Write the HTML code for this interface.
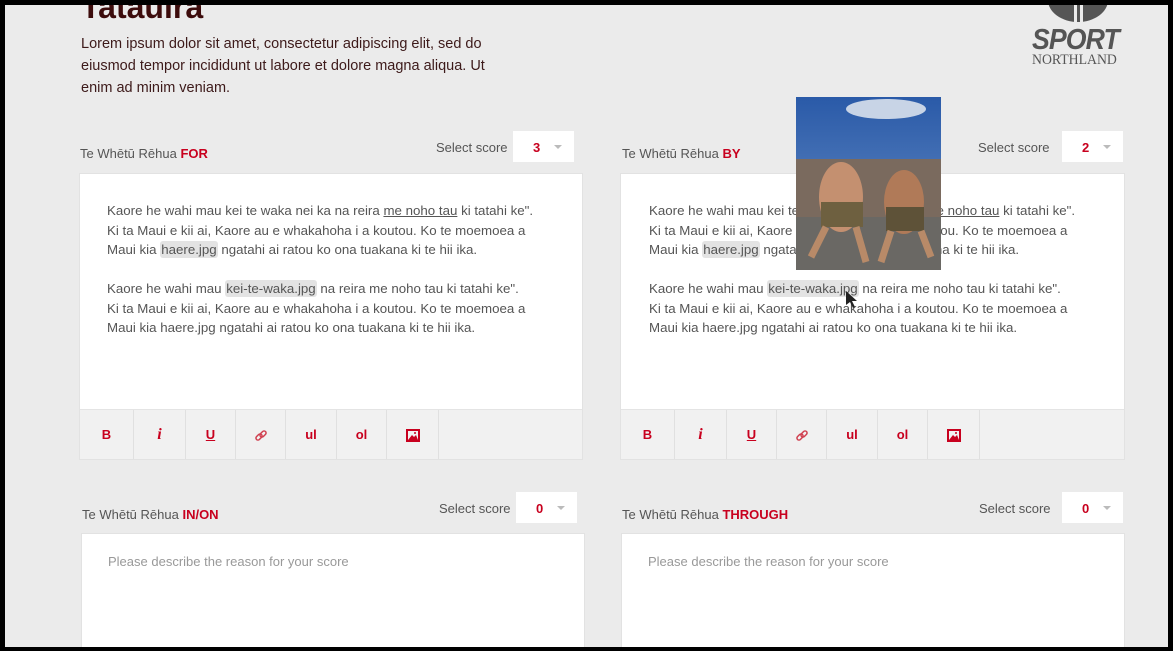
<!DOCTYPE html>
<html><head><meta charset="utf-8"><style>
*{margin:0;padding:0;box-sizing:border-box}
body{width:1173px;height:651px;overflow:hidden;background:#000;font-family:"Liberation Sans",sans-serif;position:relative}
#pg{position:absolute;left:5px;top:5px;width:1163px;height:642px;background:#ebebeb;overflow:hidden}
.a{position:absolute}
.lab{font-size:13px;color:#555}
.lab b{color:#c8001e}
.ss{font-size:13px;color:#555}
.sel{background:#fff;width:61px;height:31px;font-size:13px;font-weight:bold;color:#c8001e;padding:9px 0 0 20px}
.sel:after{content:"";position:absolute;right:12px;top:14px;border:4px solid transparent;border-top:4px solid #bbb}
.pan{background:#fff;border:1px solid #e2e2e2}
.txt{font-size:13.3px;color:#555;line-height:19.5px;white-space:nowrap}
.hl{background:#e3e3e3;border-radius:3px;padding:1px 1px}
.u{text-decoration:underline}
.tb{position:absolute;left:0;right:0;bottom:0;height:50px;background:#f1f1f1;border-top:1px solid #e4e4e4}
.tb span{position:absolute;top:0;height:49px;border-right:1px solid #e0e0e0;color:#c8001e;font-weight:bold;font-size:13px;text-align:center;line-height:49px}
.ph{font-size:13px;color:#999}
</style></head><body><div id="pg">
<div class="a" style="left:76px;top:-16px;font-size:32px;font-weight:bold;color:#3d0c0c">Tatauira</div>
<div class="a" style="left:76px;top:28px;width:425px;font-size:14.5px;line-height:22px;color:#3d1a1a">Lorem ipsum dolor sit amet, consectetur adipiscing elit, sed do eiusmod tempor incididunt ut labore et dolore magna aliqua. Ut enim ad minim veniam.</div>
<svg class="a" style="left:1040px;top:-5px" width="70" height="24"><ellipse cx="33" cy="0" rx="30" ry="22" fill="#555"/><rect x="29" y="0" width="3" height="22" fill="#ebebeb"/><rect x="35" y="0" width="3" height="22" fill="#ebebeb"/></svg>
<div class="a" style="left:1027px;top:19px;font-size:29px;font-weight:bold;font-style:italic;color:#555;letter-spacing:-1px;transform:scaleX(0.92);transform-origin:left">SPORT</div>
<div class="a" style="left:1027px;top:47px;font-size:14.5px;color:#555;font-family:'Liberation Serif',serif;transform:scaleX(0.95);transform-origin:left">NORTHLAND</div>

<div class="a lab" style="left:75px;top:141px">Te Whētū Rēhua <b>FOR</b></div>
<div class="a ss" style="left:431px;top:135px">Select score</div>
<div class="a sel" style="left:508px;top:126px">3</div>
<div class="a pan" style="left:74px;top:168px;width:504px;height:287px">
<div class="a txt" style="left:27px;top:27px">Kaore he wahi mau kei te waka nei ka na reira <span class="u">me noho tau</span> ki tatahi ke".<br>Ki ta Maui e kii ai, Kaore au e whakahoha i a koutou. Ko te moemoea a<br>Maui kia <span class="hl">haere.jpg</span> ngatahi ai ratou ko ona tuakana ki te hii ika.<br><br>Kaore he wahi mau <span class="hl">kei-te-waka.jpg</span> na reira me noho tau ki tatahi ke".<br>Ki ta Maui e kii ai, Kaore au e whakahoha i a koutou. Ko te moemoea a<br>Maui kia haere.jpg ngatahi ai ratou ko ona tuakana ki te hii ika.</div>
<div class="tb"><span style="left:0;width:54px">B</span><span style="left:54px;width:52px;font-family:'Liberation Serif';font-style:italic;font-size:16px">i</span><span style="left:106px;width:50px;text-decoration:underline">U</span><span style="left:156px;width:50px"><svg width="14" height="14" style="vertical-align:middle"><g fill="none" stroke="#d04050" stroke-width="1.5"><rect x="1.5" y="6" width="7" height="4" rx="2" transform="rotate(-45 5 8)"/><rect x="5.5" y="3" width="7" height="4" rx="2" transform="rotate(-45 9 5)"/></g></svg></span><span style="left:206px;width:51px">ul</span><span style="left:257px;width:50px">ol</span><span style="left:307px;width:52px"><svg width="14" height="13" style="vertical-align:middle"><rect x="1" y="1" width="12" height="11" fill="none" stroke="#c8001e" stroke-width="2"/><path d="M2 11L6 6L8 8L10 6L12 11Z" fill="#c8001e"/><circle cx="9" cy="4" r="1" fill="#c8001e"/></svg></span></div>
</div>

<div class="a lab" style="left:617px;top:141px">Te Whētū Rēhua <b>BY</b></div>
<div class="a ss" style="left:973px;top:135px">Select score</div>
<div class="a sel" style="left:1057px;top:126px">2</div>
<div class="a pan" style="left:615px;top:168px;width:505px;height:287px">
<div class="a txt" style="left:28px;top:27px">Kaore he wahi mau kei te waka nei ka na reira <span class="u">me noho tau</span> ki tatahi ke".<br>Ki ta Maui e kii ai, Kaore au e whakahoha i a koutou. Ko te moemoea a<br>Maui kia <span class="hl">haere.jpg</span> ngatahi ai ratou ko ona tuakana ki te hii ika.<br><br>Kaore he wahi mau <span class="hl">kei-te-waka.jpg</span> na reira me noho tau ki tatahi ke".<br>Ki ta Maui e kii ai, Kaore au e whakahoha i a koutou. Ko te moemoea a<br>Maui kia haere.jpg ngatahi ai ratou ko ona tuakana ki te hii ika.</div>
<div class="tb"><span style="left:0;width:54px">B</span><span style="left:54px;width:52px;font-family:'Liberation Serif';font-style:italic;font-size:16px">i</span><span style="left:106px;width:50px;text-decoration:underline">U</span><span style="left:156px;width:50px"><svg width="14" height="14" style="vertical-align:middle"><g fill="none" stroke="#d04050" stroke-width="1.5"><rect x="1.5" y="6" width="7" height="4" rx="2" transform="rotate(-45 5 8)"/><rect x="5.5" y="3" width="7" height="4" rx="2" transform="rotate(-45 9 5)"/></g></svg></span><span style="left:206px;width:51px">ul</span><span style="left:257px;width:50px">ol</span><span style="left:307px;width:52px"><svg width="14" height="13" style="vertical-align:middle"><rect x="1" y="1" width="12" height="11" fill="none" stroke="#c8001e" stroke-width="2"/><path d="M2 11L6 6L8 8L10 6L12 11Z" fill="#c8001e"/><circle cx="9" cy="4" r="1" fill="#c8001e"/></svg></span></div>
</div>

<svg class="a" style="left:791px;top:92px" width="145" height="173">
<defs><linearGradient id="sk" x1="0" y1="0" x2="0" y2="1"><stop offset="0" stop-color="#2a5aa8"/><stop offset="1" stop-color="#6c92c8"/></linearGradient></defs>
<rect width="145" height="173" fill="url(#sk)"/>
<ellipse cx="90" cy="12" rx="40" ry="10" fill="#c8d4e6"/>
<rect x="0" y="62" width="145" height="60" fill="#7a6a5e"/>
<rect x="0" y="120" width="145" height="53" fill="#6a6864"/>
<ellipse cx="45" cy="100" rx="22" ry="35" fill="#c49070"/>
<rect x="25" y="105" width="42" height="25" fill="#6e6040"/>
<ellipse cx="108" cy="105" rx="20" ry="32" fill="#b07a58"/>
<rect x="90" y="110" width="38" height="24" fill="#5e5238"/>
<path d="M30 130L15 160M60 130L70 165M95 134L85 165M125 134L135 160" stroke="#b88a68" stroke-width="7"/>
</svg>
<svg class="a" style="left:840px;top:285px" width="14" height="20"><path d="M1 1L1 15L5 12L8 18L10 17L7 11L12 11Z" fill="#222"/></svg>

<div class="a lab" style="left:77px;top:502px">Te Whētū Rēhua <b>IN/ON</b></div>
<div class="a ss" style="left:434px;top:496px">Select score</div>
<div class="a sel" style="left:511px;top:487px">0</div>
<div class="a pan" style="left:76px;top:528px;width:504px;height:130px"><div class="a ph" style="left:26px;top:20px">Please describe the reason for your score</div></div>

<div class="a lab" style="left:617px;top:502px">Te Whētū Rēhua <b>THROUGH</b></div>
<div class="a ss" style="left:974px;top:496px">Select score</div>
<div class="a sel" style="left:1057px;top:487px">0</div>
<div class="a pan" style="left:616px;top:528px;width:504px;height:130px"><div class="a ph" style="left:26px;top:20px">Please describe the reason for your score</div></div>
</div></body></html>
